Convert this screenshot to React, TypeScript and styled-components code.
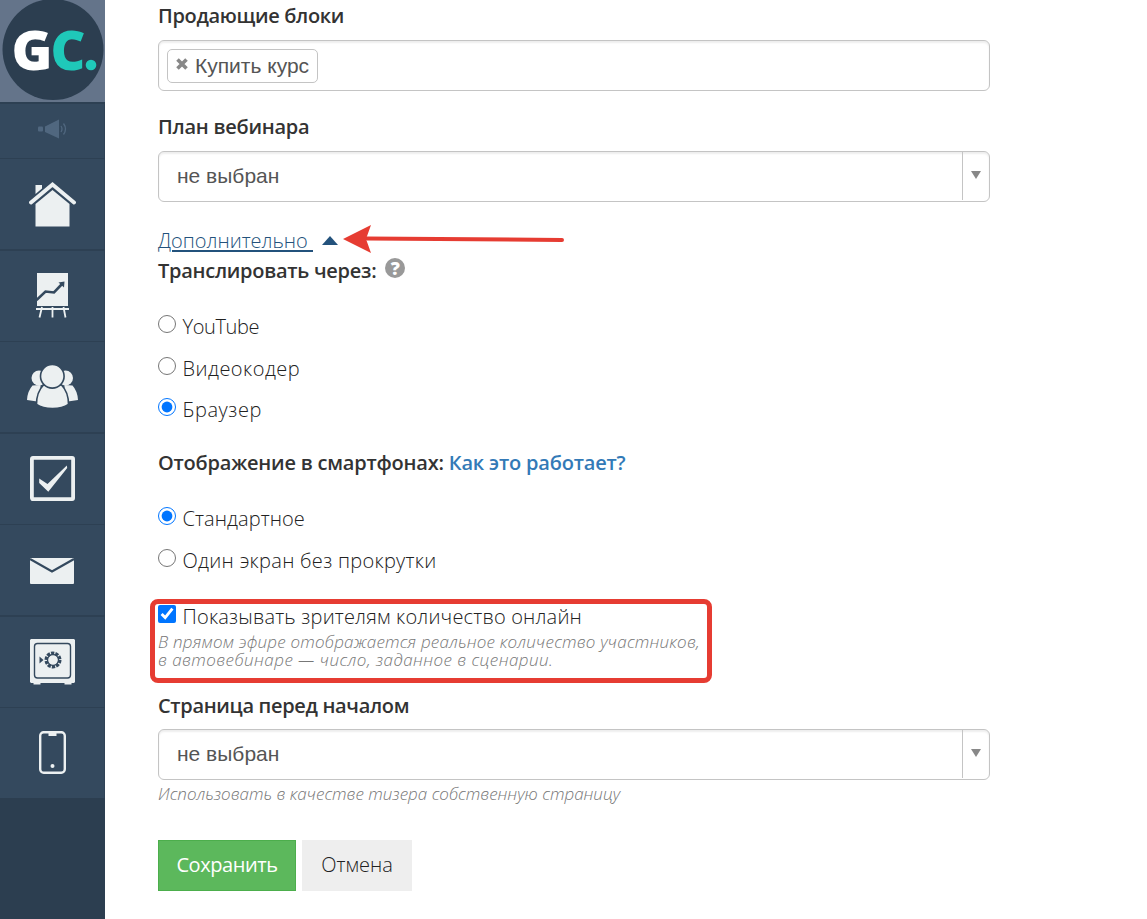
import * as React from "react";
import styled, { createGlobalStyle, css } from "styled-components";

const GlobalStyle = createGlobalStyle`
  * {
    box-sizing: border-box;
  }

  body {
    background: #fff;
    color: #212121;
    font-family: "Open Sans", "Noto Sans", sans-serif;
    font-size: 20px;
    font-weight: 300;
    margin: 0;
    overflow: hidden;
  }
`;

const Page = styled.div`
  display: flex;
  height: 919px;
  width: 1147px;
`;

/* Sidebar */

const Sidebar = styled.nav`
  background: #2c3e50;
  display: flex;
  flex: none;
  flex-direction: column;
  width: 105px;
`;

const LogoCell = styled.div`
  background: #64748a;
  height: 102px;
  overflow: hidden;
`;

const NavCell = styled.a<{ $height?: number }>`
  align-items: center;
  background: #34495e;
  border-right: 1px solid #2f4256;
  border-top: 1px solid #2d4053;
  display: flex;
  height: ${(p) => p.$height ?? 91.43}px;
  justify-content: center;
  padding-left: 1px;

  &:nth-child(even) {
    border-top-width: 2px;
  }

  svg {
    display: block;
  }
`;

/* Form */

const Form = styled.form`
  display: flex;
  flex-direction: column;
  margin-left: 53px;
  width: 832px;
`;

const Spaced = css<{ $spacing?: number }>`
  letter-spacing: ${(p) => p.$spacing ?? 0}px;
`;

const Label = styled.div<{ $top?: number; $spacing?: number }>`
  align-items: center;
  color: #333;
  display: flex;
  font-weight: 600;
  height: 30px;
  line-height: 30px;
  margin-top: ${(p) => p.$top ?? 0}px;
  padding-top: 2px;
  white-space: pre;
  ${Spaced}
`;

const HelpLink = styled.a<{ $spacing?: number }>`
  color: #337ab7;
  ${Spaced}
`;

const Field = styled.div<{ $top?: number }>`
  border: 1px solid #c4c4c4;
  border-radius: 6px;
  box-shadow: inset 0 2px 2px rgba(0, 0, 0, 0.07);
  color: #555;
  display: flex;
  font-family: "Liberation Sans", Arial, sans-serif;
  font-size: 21px;
  font-weight: 400;
  height: 51px;
  margin-top: ${(p) => p.$top ?? 10}px;
`;

const Tag = styled.span`
  align-items: center;
  background: #fff;
  border: 1px solid #c4c4c4;
  border-radius: 5px;
  display: flex;
  gap: 7px;
  height: 34px;
  margin: 8px;
  padding: 0 8px;
  white-space: nowrap;

  svg {
    margin-top: -4px;
  }
`;

const SelectValue = styled.span`
  flex: 1;
  line-height: 48px;
  padding-left: 18px;
`;

const SelectArrow = styled.span`
  border-left: 1px solid #c4c4c4;
  height: 48px;
  padding: 19px 0 0 8px;
  width: 27px;

  svg {
    display: block;
  }
`;

const MoreRow = styled.div`
  align-items: center;
  display: flex;
  height: 30px;
  margin-top: 24px;
`;

const MoreLink = styled.a<{ $spacing?: number }>`
  color: #23527c;
  line-height: 30px;
  text-decoration: underline;
  text-decoration-thickness: 2px;
  text-underline-offset: 2px;
  white-space: pre;
  ${Spaced}
`;

const Caret = styled.svg`
  margin: -1px 0 0 9px;
`;

const Arrow = styled.svg`
  margin: -4px 0 0 5px;
`;

const HelpIcon = styled.span`
  align-items: center;
  background: #999;
  border-radius: 50%;
  color: #fff;
  display: flex;
  font-size: 18px;
  font-weight: 800;
  height: 20px;
  justify-content: center;
  letter-spacing: 0;
  line-height: 20px;
  margin: -6px 0 0 9px;
  width: 20px;
`;

const Choices = styled.div<{ $top: number }>`
  display: flex;
  flex-direction: column;
  gap: 11.6px;
  margin-top: ${(p) => p.$top}px;
`;

const Choice = styled.label<{ $spacing?: number }>`
  display: flex;
  gap: 6.5px;
  height: 30px;
  line-height: 32px;
  white-space: nowrap;
  ${Spaced}

  input {
    flex: none;
    height: 18px;
    margin: 4px 0 0;
    width: 18px;
  }
`;

const Highlight = styled.div`
  border: 5px solid #e63c32;
  border-radius: 8px;
  height: 84px;
  margin: 24px 0 0 -8px;
  padding: 0 3px;
  width: 562px;

  label {
    margin-top: -3px;
  }
`;

const Hint = styled.div<{ $top?: number; $spacing?: number }>`
  color: #777;
  font-size: 17px;
  font-style: italic;
  line-height: 18px;
  margin-top: ${(p) => p.$top ?? 0}px;
  white-space: nowrap;
  ${Spaced}
`;

const Buttons = styled.div`
  display: flex;
  gap: 6px;
  margin-top: 37px;
`;

const Button = styled.button<{ $primary?: boolean; $spacing?: number }>`
  background: ${(p) => (p.$primary ? "#5cb85c" : "#eee")};
  border: 1px solid ${(p) => (p.$primary ? "#4cae4c" : "#eee")};
  color: ${(p) => (p.$primary ? "#fff" : "#212121")};
  font: inherit;
  font-weight: ${(p) => (p.$primary ? 400 : 300)};
  height: 51px;
  padding: 0 0 1px;
  width: ${(p) => (p.$primary ? 138 : 110)}px;
  ${Spaced}
`;

function Logo() {
  return (
    <svg width="105" height="102" viewBox="0 0 105 102">
      <circle cx="53" cy="49.5" r="50.5" fill="#2c3e50" />
      <g fontFamily="Open Sans" fontWeight="800" fontSize="55">
        <text x="11.5" y="69.5" fill="#fff" textLength="41" lengthAdjust="spacingAndGlyphs">G</text>
        <text x="50.5" y="69.5" fill="#1fc8b9" textLength="35" lengthAdjust="spacingAndGlyphs">C</text>
      </g>
      <circle cx="91" cy="65" r="5.3" fill="#1fc8b9" />
    </svg>
  );
}

function Megaphone() {
  return (
    <svg width="29" height="24" viewBox="0 0 29 24" fill="#50677f">
      <rect x="0" y="7.5" width="5" height="5" rx="1" />
      <path d="M7 7.500 21 .5v19L7 13z" />
      <path d="M23 7q2 3 0 6M25.500 4.500q4 5.500 0 11" fill="none" stroke="#50677f" strokeWidth="1.300" />
    </svg>
  );
}

function Home() {
  return (
    <svg width="47" height="46" viewBox="0.500 -0.500 47 46" fill="#ecf0f1">
      <path d="M7 3.500h6.500v3.500L7 12.500z" />
      <path d="M2.500 21 24 3l21.500 18" fill="none" stroke="#ecf0f1" strokeWidth="3.800" strokeLinecap="round" />
      <path d="M7 22.500 24 8.500l17 14V45H7z" />
    </svg>
  );
}

function Chart() {
  return (
    <svg width="33" height="46" viewBox="0.500 0 33 46">
      <path d="M1.500 0h31v33h-31z" fill="#ecf0f1" />
      <path d="m1 27 9-8.500 8.500 1L27 10.500" fill="none" stroke="#34495e" strokeWidth="2.600" />
      <path d="m23 9.500 6-1-.5 6z" fill="#34495e" />
      <path d="M.5 36h33M6.500 34 4 44.500M17 34v10.500M28 34l2 10.500" fill="none" stroke="#ecf0f1" strokeWidth="1.800" />
    </svg>
  );
}

function Users() {
  return (
    <svg width="51" height="44" viewBox="0.500 0 51 44" fill="#ecf0f1">
      <circle cx="12.500" cy="13" r="7.500" />
      <circle cx="39" cy="13" r="7.500" />
      <path d="M6 20.500 14 20v17L.5 35Q1 26 6 20.500zM46 20.500 38 20v17l13.500-2Q51 26 46 20.500z" />
      <g stroke="#34495e" strokeWidth="1.600">
        <path d="M17 20h18c5 5 7 12 7 19.500-8 5.500-24 5.500-32 0C10 32 12 25 17 20z" />
        <circle cx="25.800" cy="11.300" r="11.800" />
      </g>
    </svg>
  );
}

function Tasks() {
  return (
    <svg width="45" height="45" viewBox="0 0 45 45">
      <rect x="1.900" y="1.900" width="41.200" height="41.200" rx="1" fill="none" stroke="#ecf0f1" strokeWidth="3.800" />
      <path d="M9.200 22.500 17.500 28 36.800 9.500 37.200 12 18.300 35.700 9.200 27z" fill="#ecf0f1" />
    </svg>
  );
}

function Mail() {
  return (
    <svg width="45" height="28" viewBox="0 -2 45 28">
      <rect width="44" height="26" rx="1" fill="#ecf0f1" />
      <path d="m0 1 22 12.500L44 1" fill="none" stroke="#34495e" strokeWidth="2.300" />
    </svg>
  );
}

function Safe() {
  return (
    <svg width="45" height="46" viewBox="0 0 45 46">
      <path d="M1 0h43l1 1v42l-1 1h-2.500v1.500h-7V44h-24v1.500h-7V44H1l-1-1V1z" fill="#ecf0f1" />
      <rect x="4.500" y="4.500" width="36" height="34.500" rx="3" fill="none" stroke="#34495e" strokeWidth="1.400" />
      <path d="m9.500 17.500 4 3.500-4 3.500z" fill="#34495e" />
      <circle cx="23" cy="21" r="6.800" fill="none" stroke="#34495e" strokeWidth="3.400" strokeDasharray="3.200 1.073" />
      <circle cx="23" cy="21" r="5.500" fill="none" stroke="#34495e" strokeWidth="1.300" />
    </svg>
  );
}

function Phone() {
  return (
    <svg width="27" height="43" viewBox="0 0 27 43">
      <rect x="1.200" y="1.200" width="24.600" height="40.600" rx="3.500" fill="none" stroke="#ecf0f1" strokeWidth="2.400" />
      <path d="M9.500 2h8v3h-8z" fill="#ecf0f1" />
      <circle cx="13.500" cy="35" r="2" fill="#ecf0f1" />
    </svg>
  );
}

const navIcons = [Home, Chart, Users, Tasks, Mail, Safe, Phone];

function Select({ top }: { top?: number }) {
  return (
    <Field $top={top}>
      <SelectValue>не выбран</SelectValue>
      <SelectArrow>
        <svg width="10" height="8" viewBox="0 0 10 8">
          <path d="M0 0h10L5 8z" fill="#888" />
        </svg>
      </SelectArrow>
    </Field>
  );
}

export default function App() {
  return (
    <Page>
      <GlobalStyle />
      <Sidebar>
        <LogoCell>
          <Logo />
        </LogoCell>
        <NavCell $height={56}>
          <Megaphone />
        </NavCell>
        {navIcons.map((Icon, i) => (
          <NavCell key={i}>
            <Icon />
          </NavCell>
        ))}
      </Sidebar>
      <Form>
        <Label $spacing={-0.33}>Продающие блоки</Label>
        <Field>
          <Tag>
            <svg width="12" height="12" viewBox="0 0 12 12">
              <path d="m1.500 1.500 9 9m0-9-9 9" stroke="#888" strokeWidth="3.600" />
            </svg>
            Купить курс
          </Tag>
        </Field>
        <Label $top={20} $spacing={-0.25}>План вебинара</Label>
        <Select />
        <MoreRow>
          <MoreLink>{"Дополнительно "}</MoreLink>
          <Caret width="16" height="9" viewBox="0 0 16 9">
            <path d="M0 9 8 0l8 9z" fill="#23527c" />
          </Caret>
          <Arrow width="222" height="28" viewBox="0 0 222 28">
            <path d="M24 13.500 219 15" stroke="#e63c32" strokeWidth="4" strokeLinecap="round" />
            <path d="M0 14 28 0l-5 14 5 14z" fill="#e63c32" />
          </Arrow>
        </MoreRow>
        <Label $top={-1} $spacing={-0.27}>
          Транслировать через:
          <HelpIcon>?</HelpIcon>
        </Label>
        <Choices $top={26}>
          <Choice $spacing={-0.4}>
            <input type="radio" name="source" />
            YouTube
          </Choice>
          <Choice $spacing={0.48}>
            <input type="radio" name="source" />
            Видеокодер
          </Choice>
          <Choice $spacing={0.55}>
            <input type="radio" name="source" defaultChecked />
            Браузер
          </Choice>
        </Choices>
        <Label $top={23} $spacing={-0.21}>
          {"Отображение в смартфонах: "}
          <HelpLink $spacing={-0.18}>Как это работает?</HelpLink>
        </Label>
        <Choices $top={26}>
          <Choice $spacing={0.08}>
            <input type="radio" name="mobile" defaultChecked />
            Стандартное
          </Choice>
          <Choice $spacing={0.28}>
            <input type="radio" name="mobile" />
            Один экран без прокрутки
          </Choice>
        </Choices>
        <Highlight>
          <Choice $spacing={0.19}>
            <input type="checkbox" defaultChecked />
            Показывать зрителям количество онлайн
          </Choice>
          <Hint $top={2} $spacing={0.2}>В прямом эфире отображается реальное количество участников,</Hint>
          <Hint $spacing={0.45}>в автовебинаре — число, заданное в сценарии.</Hint>
        </Highlight>
        <Label $top={7} $spacing={-0.32}>Страница перед началом</Label>
        <Select top={9} />
        <Hint $top={5}>Использовать в качестве тизера собственную страницу</Hint>
        <Buttons>
          <Button type="button" $primary $spacing={-0.42}>
            Сохранить
          </Button>
          <Button type="button">Отмена</Button>
        </Buttons>
      </Form>
    </Page>
  );
}
